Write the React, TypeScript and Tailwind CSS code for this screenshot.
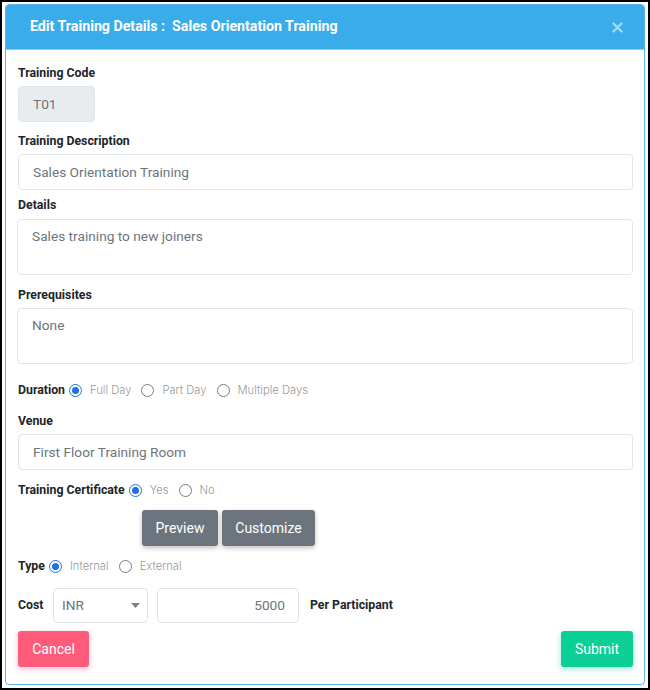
import React from "react";

const font = { fontFamily: "Roboto, 'Liberation Sans', sans-serif" };

const Radio: React.FC<{ checked?: boolean }> = ({ checked }) =>
    checked ? (
        <span className="flex h-[13px] w-[13px] shrink-0 items-center justify-center rounded-full border-[1.5px] border-[#1a73e8] bg-white">
            <span className="h-[7px] w-[7px] rounded-full bg-[#1a73e8]" />
        </span>
    ) : (
        <span className="h-[13px] w-[13px] shrink-0 rounded-full border border-[#7a7a7a] bg-white" />
    );

const RadioRow: React.FC<{ label: string; options: string[] }> = ({ label, options }) => (
    <div className="flex h-[18px] items-center">
        <span className="text-[12.3px] font-bold leading-[18px] text-[#212529]">{label}</span>
        {options.map((opt, i) => (
            <div key={opt} className={`flex items-center ${i === 0 ? "ml-[4px]" : "ml-[10px]"}`}>
                <Radio checked={i === 0} />
                <span className="ml-[8px] text-[11.2px] font-light leading-[18px] text-[#999999] [font-family:Inter,'Noto_Sans',sans-serif]">
                    {opt}
                </span>
            </div>
        ))}
    </div>
);

const Label: React.FC<{ children: React.ReactNode; className?: string }> = ({ children, className }) => (
    <div className={`text-[12.3px] font-bold leading-[18px] text-[#212529] ${className ?? ""}`}>{children}</div>
);

const TextBox: React.FC<{ value: string; className?: string; bg?: string }> = ({ value, className, bg }) => (
    <div
        className={`flex h-[36px] items-center rounded-[4px] border border-[#e1e4e8] px-[14px] text-[13.7px] text-[#6c757d] ${bg ?? "bg-white"} ${className ?? ""}`}
    >
        {value}
    </div>
);

const TextArea: React.FC<{ value: string }> = ({ value }) => (
    <div className="ml-[-1px] h-[56px] rounded-[4px] border border-[#e1e4e8] bg-white px-[14px] pt-[6px] text-[13.7px] leading-[20px] text-[#6c757d]">
        {value}
    </div>
);

export default function App() {
    return (
        <div style={font} className="h-[690px] w-[650px] border-2 border-black bg-white pl-[3px] pr-[3px] pt-[2px]">
            <div className="overflow-hidden rounded-[4px] border border-[#58b3ea] bg-white">
                <div className="flex h-[45px] items-center justify-between border-b border-[#8ccbf2] bg-[#3aacea] pl-[24px] pr-[21px]">
                    <h2 className="text-[14.2px] font-bold text-white">
                        Edit Training Details :&nbsp; Sales Orientation Training
                    </h2>
                    <svg width="11" height="11" viewBox="0 0 11 11">
                        <path d="M1.5 1.5 L9.5 9.5 M9.5 1.5 L1.5 9.5" stroke="#a9d8f5" strokeWidth="2.4" strokeLinecap="round" />
                    </svg>
                </div>

                <div className="pb-[17px] pl-[12px] pr-[11px] pt-[14px]">
                    <Label className="mb-[4px]">Training Code</Label>
                    <TextBox value="T01" className="w-[77px]" bg="bg-[#e9ecef]" />

                    <Label className="mb-[4px] mt-[10px]">Training Description</Label>
                    <TextBox value="Sales Orientation Training" />

                    <Label className="mb-[5px] mt-[6px]">Details</Label>
                    <TextArea value="Sales training to new joiners" />

                    <Label className="mb-[4px] mt-[11px]">Prerequisites</Label>
                    <TextArea value="None" />

                    <div className="mt-[17px]">
                        <RadioRow label="Duration" options={["Full Day", "Part Day", "Multiple Days"]} />
                    </div>

                    <Label className="mb-[4px] mt-[13px]">Venue</Label>
                    <TextBox value="First Floor Training Room" />

                    <div className="mt-[11px]">
                        <RadioRow label="Training Certificate" options={["Yes", "No"]} />
                    </div>

                    <div className="ml-[124px] mt-[11px] flex gap-[4px]">
                        <button className="h-[36px] w-[76px] rounded-[3px] bg-[#6c757d] text-[14px] text-white shadow-[0_2px_5px_rgba(0,0,0,0.25)]">
                            Preview
                        </button>
                        <button className="h-[36px] w-[93px] rounded-[3px] bg-[#6c757d] text-[14px] text-white shadow-[0_2px_5px_rgba(0,0,0,0.25)]">
                            Customize
                        </button>
                    </div>

                    <div className="mt-[11px]">
                        <RadioRow label="Type" options={["Internal", "External"]} />
                    </div>

                    <div className="mt-[13px] flex h-[35px] items-center">
                        <span className="w-[35px] text-[12.3px] font-bold text-[#212529]">Cost</span>
                        <div className="flex h-[35px] w-[95px] items-center justify-between rounded-[4px] border border-[#e1e4e8] pl-[8px] pr-[7px] text-[13.7px] text-[#6c757d]">
                            <span>INR</span>
                            <svg width="9" height="5" viewBox="0 0 9 5">
                                <path d="M0 0 L9 0 L4.5 5 Z" fill="#808080" />
                            </svg>
                        </div>
                        <div className="ml-[9px] flex h-[35px] w-[142px] items-center justify-end rounded-[4px] border border-[#e1e4e8] pr-[13px] text-[13.7px] text-[#6c757d]">
                            5000
                        </div>
                        <span className="ml-[11px] text-[12.3px] font-bold text-[#212529]">Per Participant</span>
                    </div>

                    <div className="mt-[8px] flex justify-between">
                        <button className="h-[36px] w-[71px] rounded-[3px] bg-[#ff5c7c] text-[14px] text-white shadow-[0_2px_6px_rgba(255,92,124,0.4)]">
                            Cancel
                        </button>
                        <button className="h-[36px] w-[72px] rounded-[3px] bg-[#0bcf94] text-[14px] text-white shadow-[0_2px_6px_rgba(11,207,148,0.4)]">
                            Submit
                        </button>
                    </div>
                </div>
            </div>
        </div>
    );
}
